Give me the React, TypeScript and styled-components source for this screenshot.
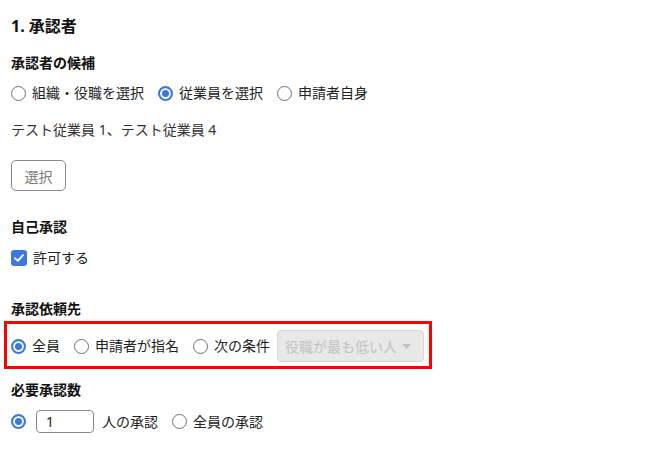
import React, { useState } from 'react';
import styled, { createGlobalStyle } from 'styled-components';

const GlobalStyle = createGlobalStyle`
  html, body {
    margin: 0;
    padding: 0;
    background: #ffffff;
  }
  body {
    font-family: "Noto Sans", "Noto Sans CJK JP", sans-serif;
    color: #222222;
  }
`;

const Page = styled.div`
  display: flex;
  flex-direction: column;
  padding: 16px 0 0 11px;
  width: 661px;
  height: 459px;
  box-sizing: border-box;
`;

const Title = styled.h2`
  margin: 0;
  font-size: 16px;
  line-height: 20px;
  font-weight: 700;
  color: #111111;
`;

const Label = styled.div<{ $gap: number }>`
  margin-top: ${p => p.$gap}px;
  font-size: 14px;
  line-height: 20px;
  font-weight: 700;
  color: #111111;
`;

const Row = styled.div<{ $gap: number; $height?: number }>`
  display: flex;
  align-items: center;
  gap: 14px;
  margin-top: ${p => p.$gap}px;
  height: ${p => p.$height ?? 20}px;
`;

const Highlight = styled.div`
  display: flex;
  align-items: center;
  gap: 14px;
  margin: 2px 0 0 -7px;
  width: 428px;
  height: 48px;
  box-sizing: border-box;
  border: 3px solid #ff0000;
  padding: 2px 5px 0 4px;
`;

const Choice = styled.label`
  display: flex;
  align-items: center;
  gap: 6px;
  font-size: 14px;
  line-height: 20px;
  color: #222222;
  white-space: nowrap;
`;

const Radio = styled.input.attrs({ type: 'radio' })`
  appearance: none;
  margin: 0;
  width: 15px;
  height: 15px;
  border-radius: 50%;
  border: 1.5px solid #6f6f6f;
  background: #ffffff;
  box-sizing: border-box;
  flex-shrink: 0;

  &:checked {
    border: 2px solid #3b78df;
    background: #3b78df;
    box-shadow: inset 0 0 0 2px #ffffff;
  }
`;

const CheckBox = styled.span`
  display: flex;
  align-items: center;
  justify-content: center;
  width: 16px;
  height: 16px;
  border-radius: 3px;
  background: #3b78df;
`;

const Names = styled.div`
  margin-top: 17px;
  font-size: 14px;
  line-height: 20px;
  color: #333333;
`;

const SelectButton = styled.button`
  align-self: flex-start;
  margin-top: 20px;
  width: 55px;
  height: 31px;
  border: 1px solid #8a8a8a;
  border-radius: 5px;
  background: #ffffff;
  font-family: inherit;
  font-size: 14px;
  color: #7a7a7a;
  padding: 0;
`;

const Dropdown = styled.div`
  display: flex;
  align-items: center;
  justify-content: space-between;
  margin-left: -7px;
  width: 147px;
  height: 32px;
  box-sizing: border-box;
  padding: 0 12px 0 7px;
  background: #e8e8e8;
  border: 1px solid #d6d6d6;
  border-radius: 4px;
  font-size: 14px;
  color: #c2c2c2;
  white-space: nowrap;
`;

const CountInput = styled.input`
  margin: 0 -6px 0 -4px;
  width: 58px;
  height: 23px;
  box-sizing: border-box;
  border: 1px solid #8a8a8a;
  border-radius: 4px;
  padding: 0 9px;
  font-family: inherit;
  font-size: 14px;
  color: #222222;
`;

const App: React.FC = () => {
  const [candidate, setCandidate] = useState('employee');
  const [target, setTarget] = useState('all');
  const [count, setCount] = useState('limited');
  const [num, setNum] = useState('1');

  return (
    <>
      <GlobalStyle />
      <Page>
        <Title>1. 承認者</Title>

        <Label $gap={17}>承認者の候補</Label>
        <Row $gap={10}>
          <Choice>
            <Radio name="candidate" checked={candidate === 'org'} onChange={() => setCandidate('org')} />
            組織・役職を選択
          </Choice>
          <Choice>
            <Radio name="candidate" checked={candidate === 'employee'} onChange={() => setCandidate('employee')} />
            従業員を選択
          </Choice>
          <Choice>
            <Radio name="candidate" checked={candidate === 'self'} onChange={() => setCandidate('self')} />
            申請者自身
          </Choice>
        </Row>
        <Names>テスト従業員 1、テスト従業員 4</Names>
        <SelectButton>選択</SelectButton>

        <Label $gap={26}>自己承認</Label>
        <Row $gap={11}>
          <Choice>
            <CheckBox>
              <svg width="12" height="12" viewBox="0 0 11 11">
                <path d="M1.8 5.6 L4.4 8.1 L9.2 2.9" fill="none" stroke="#ffffff" strokeWidth="1.7" strokeLinecap="round" strokeLinejoin="round" />
              </svg>
            </CheckBox>
            許可する
          </Choice>
        </Row>

        <Label $gap={31}>承認依頼先</Label>
        <Highlight>
          <Choice>
            <Radio name="target" checked={target === 'all'} onChange={() => setTarget('all')} />
            全員
          </Choice>
          <Choice>
            <Radio name="target" checked={target === 'named'} onChange={() => setTarget('named')} />
            申請者が指名
          </Choice>
          <Choice>
            <Radio name="target" checked={target === 'cond'} onChange={() => setTarget('cond')} />
            次の条件
          </Choice>
          <Dropdown>
            役職が最も低い人
            <svg width="9" height="5" viewBox="0 0 9 5">
              <path d="M0 0 L9 0 L4.5 5 Z" fill="#c2c2c2" />
            </svg>
          </Dropdown>
        </Highlight>

        <Label $gap={11}>必要承認数</Label>
        <Row $gap={10} $height={23}>
          <Choice>
            <Radio name="count" checked={count === 'limited'} onChange={() => setCount('limited')} />
          </Choice>
          <CountInput value={num} onChange={e => setNum(e.target.value)} />
          <Choice>人の承認</Choice>
          <Choice>
            <Radio name="count" checked={count === 'all'} onChange={() => setCount('all')} />
            全員の承認
          </Choice>
        </Row>
      </Page>
    </>
  );
};

export default App;
